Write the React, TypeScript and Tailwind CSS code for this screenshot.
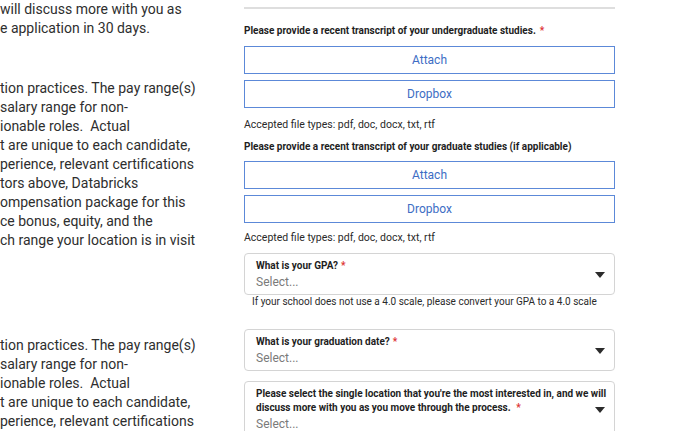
import React from "react";

const font = { fontFamily: "Roboto, 'Noto Sans', sans-serif" };

function Chevron() {
  return (
    <svg width="10" height="6" viewBox="0 0 10 6" className="shrink-0">
      <path d="M0 0 H10 L5 6 Z" fill="#2b2b2b" />
    </svg>
  );
}

function FileButton({ label }: { label: string }) {
  return (
    <div className="h-[28px] border border-[#5c89d8] flex items-center justify-center text-[12px] text-[#3d6dc4]">
      {label}
    </div>
  );
}

function SelectBox({ lines, className }: { lines: string[]; className?: string }) {
  return (
    <div className={"border border-[#d4d4d4] rounded-[4px] pl-[11px] pr-[9px] pt-[5px] pb-[3px] flex items-center " + (className ?? "")}>
      <div className="flex-1 min-w-0">
        <div className="text-[10px] leading-[14px] font-bold text-[#1e1e1e] whitespace-nowrap">
          {lines.map((l, i) => (
            <div key={i}>
              {l}
              {i === lines.length - 1 && <span className="text-[#d33] ml-[3px]">*</span>}
            </div>
          ))}
        </div>
        <div className="text-[12px] leading-[17px] text-[#7a7a7a] mt-[1px]">Select...</div>
      </div>
      <Chevron />
    </div>
  );
}

export default function App() {
  const block1 = [
    "tion practices. The pay range(s)",
    "salary range for non-",
    "ionable roles.  Actual",
    "t are unique to each candidate,",
    "perience, relevant certifications",
    "tors above, Databricks",
    "ompensation package for this",
    "ce bonus, equity, and the",
    "ch range your location is in visit",
  ];
  const block2 = [
    "tion practices. The pay range(s)",
    "salary range for non-",
    "ionable roles.  Actual",
    "t are unique to each candidate,",
    "perience, relevant certifications",
  ];
  return (
    <div className="w-[690px] h-[431px] overflow-hidden bg-white flex" style={font}>
      <div className="w-[244px] shrink-0 text-[14px] leading-[19px] text-[#2e2e2e] whitespace-pre">
        <div>will discuss more with you as</div>
        <div>e application in 30 days.</div>
        <div className="mt-[41px]">
          {block1.map((l, i) => (
            <div key={i}>{l}</div>
          ))}
        </div>
        <div className="mt-[86px]">
          {block2.map((l, i) => (
            <div key={i}>{l}</div>
          ))}
        </div>
      </div>
      <div className="w-[371px] shrink-0 flex flex-col">
        <div className="mt-[7px] border-t-2 border-[#dedede]" />
        <div className="mt-[15px] text-[10px] leading-[14px] font-bold text-[#1e1e1e] whitespace-nowrap">
          Please provide a recent transcript of your undergraduate studies.
          <span className="text-[#d33] ml-[4px]">*</span>
        </div>
        <div className="mt-[8px] flex flex-col gap-[6px]">
          <FileButton label="Attach" />
          <FileButton label="Dropbox" />
        </div>
        <div className="mt-[10px] text-[10.5px] leading-[14px] text-[#2a2a2a]">
          Accepted file types: pdf, doc, docx, txt, rtf
        </div>
        <div className="mt-[8px] text-[10px] leading-[14px] font-bold text-[#1e1e1e] whitespace-nowrap">
          Please provide a recent transcript of your graduate studies (if applicable)
        </div>
        <div className="mt-[7px] flex flex-col gap-[6px]">
          <FileButton label="Attach" />
          <FileButton label="Dropbox" />
        </div>
        <div className="mt-[8px] text-[10.5px] leading-[14px] text-[#2a2a2a]">
          Accepted file types: pdf, doc, docx, txt, rtf
        </div>
        <SelectBox className="mt-[8px]" lines={["What is your GPA?"]} />
        <div className="pl-[8px] text-[10px] leading-[14px] text-[#2a2a2a] whitespace-nowrap">
          If your school does not use a 4.0 scale, please convert your GPA to a 4.0 scale
        </div>
        <SelectBox className="mt-[20px]" lines={["What is your graduation date?"]} />
        <SelectBox
          className="mt-[10px]"
          lines={[
            "Please select the single location that you're the most interested in, and we will",
            "discuss more with you as you move through the process. ",
          ]}
        />
      </div>
    </div>
  );
}
